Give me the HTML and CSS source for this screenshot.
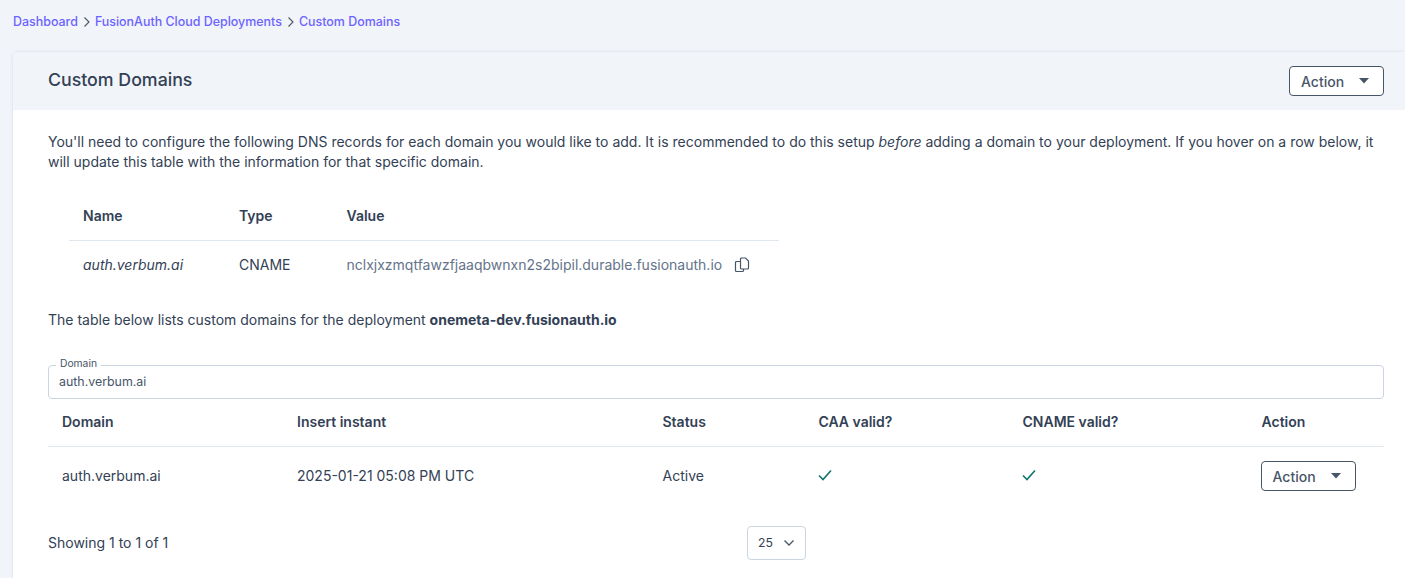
FILE: index.html
```html
<!DOCTYPE html>
<html lang="en">
<head>
<meta charset="utf-8">
<title>Custom Domains</title>
<link rel="stylesheet" href="styles.css">
</head>
<body>
<nav class="crumbs">
  <a href="#">Dashboard</a>
  <svg class="sep" viewBox="0 0 10 12" width="10" height="12"><path d="M2.500 1.500 7 6l-4.500 4.500" fill="none" stroke="#4b5563" stroke-width="1.100"/></svg>
  <a href="#">FusionAuth Cloud Deployments</a>
  <svg class="sep" viewBox="0 0 10 12" width="10" height="12"><path d="M2.500 1.500 7 6l-4.500 4.500" fill="none" stroke="#4b5563" stroke-width="1.100"/></svg>
  <a href="#">Custom Domains</a>
</nav>
<main class="card">
  <header class="card-head">
    <h1>Custom Domains</h1>
    <button class="btn btn-head">Action<svg class="caret" viewBox="0 0 10 6" width="10" height="6"><path d="M0 0h10L5 5.500z" fill="#475569"/></svg></button>
  </header>
  <section class="card-body">
    <p class="intro">You'll need to configure the following DNS records for each domain you would like to add. It is recommended to do this setup <em>before</em> adding a domain to your deployment. If you hover on a row below, it will update this table with the information for that specific domain.</p>
    <div class="dns">
      <div class="dns-row dns-head"><span>Name</span><span>Type</span><span>Value</span></div>
      <div class="dns-row dns-data">
        <em>auth.verbum.ai</em><span>CNAME</span>
        <span class="value">nclxjxzmqtfawzfjaaqbwnxn2s2bipil.durable.fusionauth.io
          <svg class="copy" viewBox="0 0 16 16" width="16" height="16" fill="none" stroke="#475569" stroke-width="1.200"><path d="M6 4.500H2.500a1 1 0 0 0-1 1V13.500a1 1 0 0 0 1 1H8.500a1 1 0 0 0 1-1V12"/><path d="M6.500 2a1 1 0 0 1 1-1H11.500L14.500 4v7a1 1 0 0 1-1 1H7.500a1 1 0 0 1-1-1z"/></svg>
        </span>
      </div>
    </div>
    <p class="lead">The table below lists custom domains for the deployment <strong>onemeta-dev.fusionauth.io</strong></p>
    <div class="field">
      <span class="field-label">Domain</span>
      <span class="field-value">auth.verbum.ai</span>
    </div>
    <div class="domains">
      <div class="dom-row dom-head"><span>Domain</span><span>Insert instant</span><span>Status</span><span>CAA valid?</span><span>CNAME valid?</span><span>Action</span></div>
      <div class="dom-row dom-data">
        <span>auth.verbum.ai</span><span>2025-01-21 05:08 PM UTC</span><span>Active</span>
        <svg class="check" viewBox="0 0 14 12" width="14" height="12"><path d="M1 6.500 5 10.500 13 1.500" fill="none" stroke="#0f766e" stroke-width="1.600"/></svg>
        <svg class="check" viewBox="0 0 14 12" width="14" height="12"><path d="M1 6.500 5 10.500 13 1.500" fill="none" stroke="#0f766e" stroke-width="1.600"/></svg>
        <button class="btn btn-row">Action<svg class="caret" viewBox="0 0 10 6" width="10" height="6"><path d="M0 0h10L5 5.500z" fill="#475569"/></svg></button>
      </div>
    </div>
    <footer class="pager">
      <span class="showing">Showing 1 to 1 of 1</span>
      <div class="size">25<svg viewBox="0 0 12 8" width="12" height="8"><path d="M1.500 1.500 6 6l4.500-4.500" fill="none" stroke="#475569" stroke-width="1.300"/></svg></div>
    </footer>
  </section>
</main>
</body>
</html>
```
FILE: styles.css
```css
* { box-sizing: border-box; }
html, body { height: 100%; }
body {
  margin: 0;
  background: #f1f4f9;
  font-family: Inter, "Liberation Sans", sans-serif;
  font-size: 14px;
  line-height: 20px;
  color: #334155;
  overflow: hidden;
}
.crumbs {
  display: flex;
  align-items: center;
  height: 52px;
  padding: 0 0 9px 13px;
  font-size: 12.450px;
  font-weight: 500;
}
.crumbs a { color: #6c63ff; text-decoration: none; }
.sep { margin: 0 3px 0 4px; }
.card {
  margin-left: 13px;
  background: #fff;
  box-shadow: 0 0 3px rgba(100, 116, 139, 0.22);
  border-radius: 4px 0 0 0;
  height: 526px;
}
.card-head {
  display: flex;
  align-items: center;
  justify-content: space-between;
  height: 58px;
  padding: 0 21px 2px 35px;
  background: #f1f4f9;
}
h1 {
  margin: 0;
  font-size: 17.750px;
  font-weight: 500;
  color: #334155;
}
.btn {
  display: flex;
  align-items: center;
  background: #fff;
  border: 1px solid #475569;
  border-radius: 4px;
  font: 500 14px Inter, "Liberation Sans", sans-serif;
  color: #475569;
  height: 30px;
  padding: 0 0 0 11px;
  width: 95px;
}
.btn-head { margin-top: 2px; }
.btn-row { margin-left: -1px; }
.caret { margin-left: 15px; }
.card-body { padding: 22px 21px 0 35px; }
.intro { margin: 0; }
.dns { width: 710px; margin: 19px 0 0 21px; }
.dns-row {
  display: grid;
  grid-template-columns: 156px 107.500px 1fr;
  padding-left: 14px;
  align-items: center;
}
.dns-head { height: 50px; font-weight: 600; border-bottom: 1px solid #e2e8f0; }
.dns-data { height: 50px; padding-bottom: 2px; }
.value { display: flex; align-items: center; color: #64748b; }
.copy { margin-left: 12px; }
.lead { margin: 19px 0 0; }
.lead strong { font-weight: 700; color: #334155; }
.field {
  position: relative;
  margin-top: 35px;
  padding: 6px 10px 0;
  height: 34px;
  border: 1px solid #cbd5e1;
  border-radius: 4px;
  font-size: 12.400px;
}
.field-label {
  position: absolute;
  left: 7px;
  top: -10px;
  padding: 0 4px;
  background: #fff;
  font-size: 10.300px;
  line-height: 14px;
  height: 11px;
  color: #475569;
}
.field-value { display: block; line-height: 20px; color: #475569; }
.dom-row {
  display: grid;
  grid-template-columns: 235px 365.500px 156px 204px 239px 1fr;
  padding-left: 14px;
  align-items: center;
}
.dom-head { height: 48px; padding-bottom: 1px; font-weight: 600; border-bottom: 1px solid #e2e8f0; }
.dom-data { height: 58px; }
.check { margin: -2px 0 0 -1px; }
.pager {
  display: grid;
  grid-template-columns: 699px auto;
  align-items: center;
  height: 34px;
  margin-top: 21px;
}
.size {
  display: flex;
  align-items: center;
  justify-content: space-between;
  width: 59px;
  height: 34px;
  padding: 0 10px;
  border: 1px solid #cbd5e1;
  border-radius: 4px;
  font-size: 12.250px;
}
```
